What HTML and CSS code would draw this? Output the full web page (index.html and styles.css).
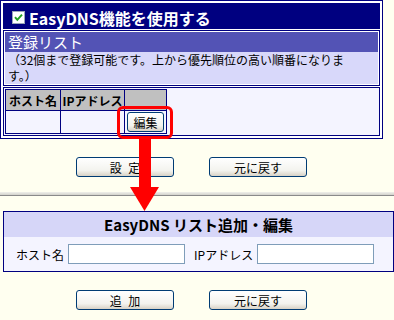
FILE: index.html
```html
<!DOCTYPE html>
<html lang="ja">

<head>
    <meta charset="UTF-8">
    <meta name="viewport" content="width=device-width, initial-scale=1.0">
    <title>EasyDNS</title>
    <link rel="stylesheet" href="styles.css">
</head>

<body>
    <div class="page">
        <div class="panel">
            <div class="title">
                <span class="check">
                    <svg width="13" height="13" viewBox="0 0 13 13">
                        <rect x="0.5" y="0.5" width="12" height="12" fill="#fff" stroke="#9aa6b8"/>
                        <path d="M3 6.2 L5.3 8.8 L10 3.6" fill="none" stroke="#22a022" stroke-width="2"/>
                    </svg>
                </span>
                EasyDNS機能を使用する
            </div>
            <div class="box">
                <div class="box-head">登録リスト</div>
                <div class="box-desc">（32個まで登録可能です。上から優先順位の高い順番になりま<br>す。）</div>
            </div>
            <div class="box list-box">
                <table class="list">
                    <tr>
                        <th class="c-host">ホスト名</th>
                        <th class="c-ip">IPアドレス</th>
                        <th class="c-btn"></th>
                    </tr>
                    <tr>
                        <td></td>
                        <td></td>
                        <td><button class="btn btn-edit">編集</button></td>
                    </tr>
                </table>
            </div>
        </div>

        <div class="buttons">
            <button class="btn">設 定</button>
            <button class="btn">元に戻す</button>
        </div>

        <hr class="sep">

        <div class="edit">
            <div class="edit-head">EasyDNS リスト追加・編集</div>
            <div class="edit-row">
                <label>ホスト名</label>
                <input type="text">
                <label class="ip">IPアドレス</label>
                <input type="text">
            </div>
        </div>

        <div class="buttons">
            <button class="btn">追 加</button>
            <button class="btn">元に戻す</button>
        </div>

        <!-- 強調の枠と矢印 -->
        <div class="mark"></div>
        <svg class="arrow" width="29" height="74" viewBox="0 0 29 74">
            <rect x="9" y="0" width="12" height="49" fill="#ff0000"/>
            <polygon points="0,48 29,48 14.5,72" fill="#ff0000"/>
        </svg>
    </div>
</body>

</html>
```

FILE: styles.css
```css
body {
    margin: 0;
    background-color: #FFFFF0;
    font-family: "Noto Sans CJK JP", sans-serif;
    font-size: 12px;
    color: #000;
}

.page {
    position: relative;
}

.panel {
    width: 383px;
    box-sizing: border-box;
    border: 1px solid #000080;
    padding: 2px;
    background-color: #fff;
}

.title {
    height: 26px;
    box-sizing: border-box;
    padding: 3px 0 0 9px;
    display: flex;
    align-items: center;
    background-color: #000080;
    color: #fff;
    font-size: 16px;
    font-weight: bold;
}

.check {
    display: flex;
    margin-right: 4px;
}

.box {
    margin-top: 1px;
    border: 1px solid #000080;
    padding: 1px;
    background-color: #fff;
}

.box-head {
    height: 20px;
    line-height: 20px;
    padding-left: 3px;
    background-color: #5353B5;
    color: #fff;
    font-size: 15px;
}

.box-desc {
    padding: 0 3px;
    line-height: 16px;
    background-color: #D8D8FA;
}

.list-box {
    margin-top: 1px;
    background-color: #F4F4FF;
}

.list {
    border-collapse: collapse;
}

.list th,
.list td {
    border: 1px solid #000080;
    padding: 0;
    text-align: center;
}

.list th {
    height: 20px;
    background-color: #C0C0C0;
    font-weight: bold;
}

.list td {
    height: 22px;
}

.c-host {
    width: 54px;
}

.c-ip {
    width: 63px;
}

.c-btn {
    width: 41px;
}

.btn {
    width: 98px;
    height: 20px;
    box-sizing: border-box;
    padding: 0;
    border: 1px solid #003C74;
    border-radius: 3px;
    background: linear-gradient(#ffffff, #f3f3ee 70%, #d8d2c6);
    font-family: "Noto Sans CJK JP", sans-serif;
    font-size: 12px;
    word-spacing: 4px;
    color: #000;
}

.btn-edit {
    width: 37px;
    vertical-align: middle;
}

.buttons {
    width: 383px;
    margin-top: 18px;
    display: flex;
    justify-content: center;
    gap: 35px;
}

.sep {
    margin: 15px 0 0;
    height: 3px;
    border: 0;
    border-bottom: 1px solid #8a8a8a;
    background: linear-gradient(#f0f0ea, #d2d2cc);
}

.edit {
    margin: 15px 0 0 3px;
    width: 391px;
    box-sizing: border-box;
    border: 1px solid #000080;
}

.edit-head {
    height: 25px;
    line-height: 25px;
    text-align: center;
    background-color: #D6D6F8;
    font-size: 15px;
    font-weight: bold;
}

.edit-row {
    height: 34px;
    padding-left: 12px;
    display: flex;
    align-items: center;
    background-color: #F4F4FF;
}

.edit-row label {
    margin-right: 4px;
}

.edit-row .ip {
    margin-left: 9px;
}

.edit-row input {
    width: 117px;
    height: 20px;
    box-sizing: border-box;
    margin: 0;
    padding: 0;
    border: 1px solid #7F9DB9;
    background-color: #fff;
}

.mark {
    position: absolute;
    left: 117px;
    top: 106px;
    width: 56px;
    height: 33px;
    box-sizing: border-box;
    border: 3px solid #ff0000;
    border-radius: 6px;
}

.arrow {
    position: absolute;
    left: 130px;
    top: 139px;
}
```
